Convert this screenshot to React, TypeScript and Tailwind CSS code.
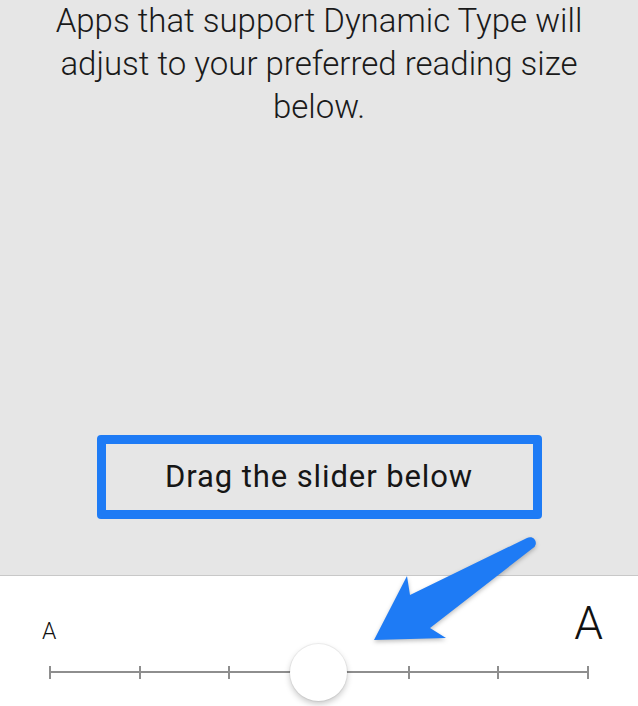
import React from "react";

const ticks = [0, 1, 2, 3, 4, 5, 6];

function SizeSlider() {
  return (
    <div className="relative mx-[49px] h-[13px]">
      <div className="absolute left-0 right-0 top-[5px] h-[2px] bg-[#8e8e8e]" />
      <div className="relative flex h-full justify-between">
        {ticks.map((t) => (
          <div key={t} className="h-full w-[2px] bg-[#8e8e8e]" />
        ))}
      </div>
      {/* thumb sits on the middle stop */}
      <div className="absolute left-[241px] top-[-22px] h-[57px] w-[57px] rounded-full bg-white shadow-[0_3px_6px_rgba(0,0,0,0.22),0_0_0_1px_rgba(0,0,0,0.05)]" />
    </div>
  );
}

function PointerArrow() {
  return (
    <svg
      className="pointer-events-none absolute left-0 top-0"
      width="638"
      height="706"
      viewBox="0 0 638 706"
    >
      <path
        d="M527 538 L410 595 L407 576 L374 640 L446 638 L430 628 L533 548 A5.5 5.5 0 0 0 527 538 Z"
        fill="#1e7bf5"
        style={{ filter: "drop-shadow(0 2px 2px rgba(0,0,0,0.25))" }}
      />
    </svg>
  );
}

export default function App() {
  return (
    <div
      className="relative flex h-[706px] w-[638px] flex-col overflow-hidden bg-white"
      style={{ fontFamily: "Roboto, 'Liberation Sans', sans-serif" }}
    >
      <div className="flex h-[576px] flex-col items-center border-b border-[#c8c8c8] bg-[#e6e6e6]">
        <p className="-mt-px text-center text-[33px] font-light leading-[43px] text-[#1a1a1a]">
          Apps that support Dynamic Type will
          <br />
          adjust to your preferred reading size
          <br />
          below.
        </p>
        <div className="mt-auto mb-[56px] flex h-[84px] w-[445px] items-center justify-center rounded-[4px] border-[9px] border-[#1e7bf5]">
          <span className="text-[31px] tracking-[0.9px] text-[#161616]">Drag the slider below</span>
        </div>
      </div>

      <div className="flex flex-1 flex-col">
        <div className="mt-[24px] flex items-baseline justify-between pl-[42px] pr-[35px] font-light text-[#111]">
          <span className="text-[23px] leading-none">A</span>
          <span className="text-[46px] leading-none">A</span>
        </div>
        <div className="mt-[20px]">
          <SizeSlider />
        </div>
      </div>

      <PointerArrow />
    </div>
  );
}
